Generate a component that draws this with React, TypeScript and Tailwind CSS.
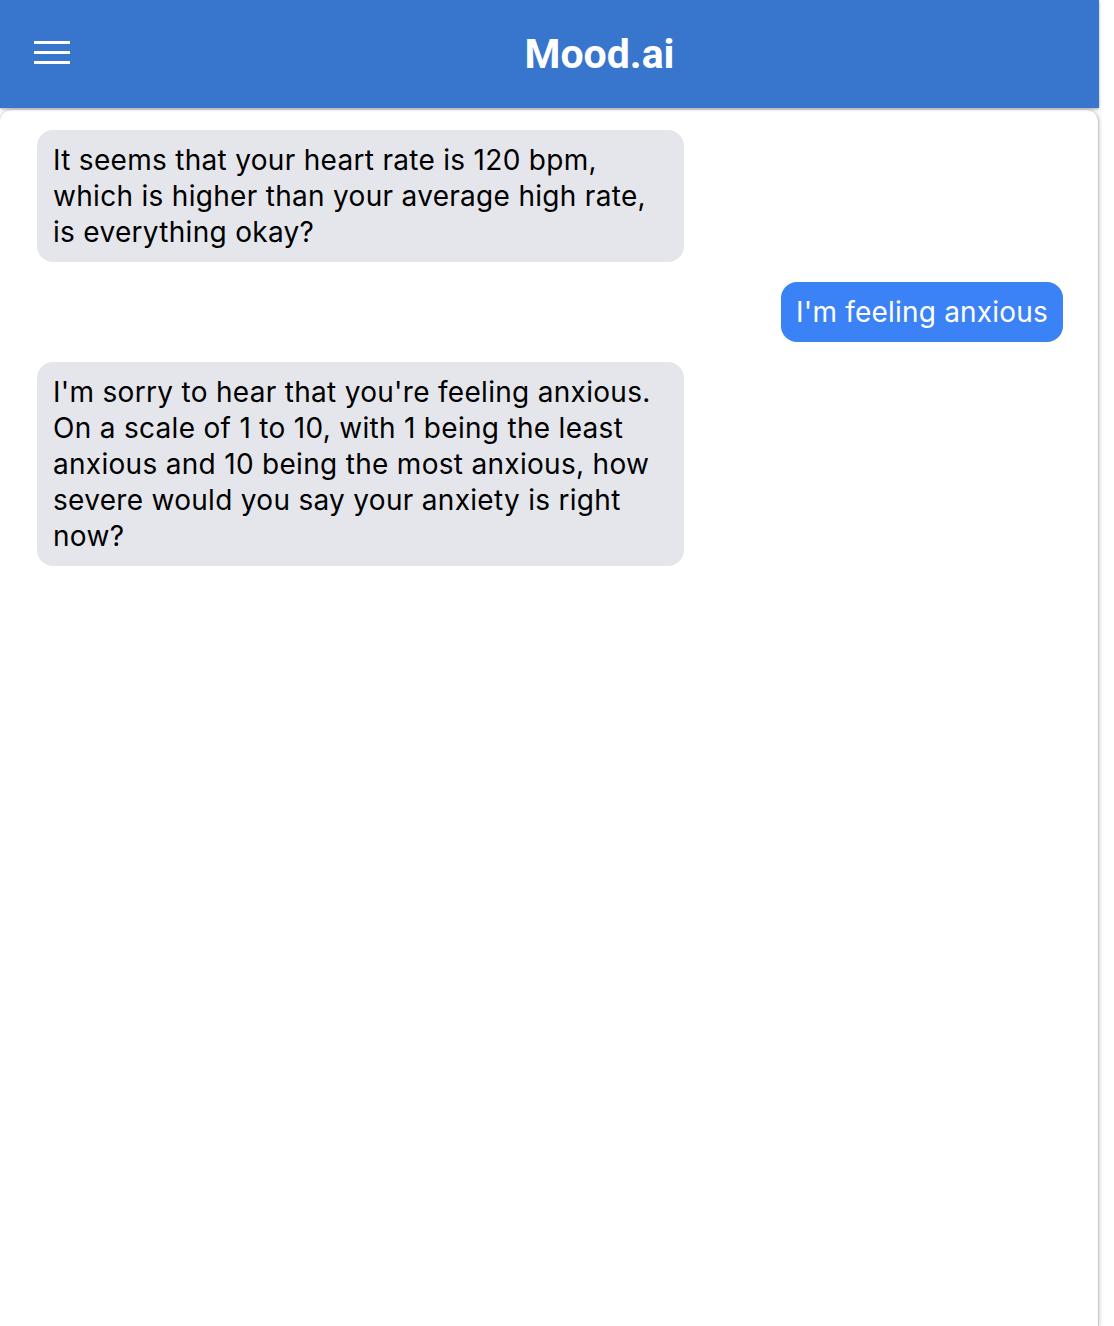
const messages = [
  {
    from: "bot",
    text: "It seems that your heart rate is 120 bpm, which is higher than your average high rate, is everything okay?",
  },
  { from: "user", text: "I'm feeling anxious" },
  {
    from: "bot",
    text: "I'm sorry to hear that you're feeling anxious. On a scale of 1 to 10, with 1 being the least anxious and 10 being the most anxious, how severe would you say your anxiety is right now?",
  },
];

const MenuIcon = () => {
  return (
    <button className="flex flex-col gap-[6.5px] w-[36px]">
      <span className="block h-[3.5px] w-full bg-white" />
      <span className="block h-[3.5px] w-full bg-white" />
      <span className="block h-[3.5px] w-full bg-white" />
    </button>
  );
};

const Bubble = ({ from, text }: { from: string; text: string }) => {
  if (from === "user") {
    return (
      <div className="flex justify-end">
        <p className="bg-[#3b82f6] text-white rounded-2xl px-[15px] py-3 max-w-[647px] text-[28px] leading-[36px] tracking-[0.2px]">
          {text}
        </p>
      </div>
    );
  }
  return (
    <div className="flex justify-start">
      <p className="bg-[#e5e6eb] text-black rounded-2xl px-4 py-3 max-w-[647px] w-[647px] text-[28px] leading-[36px] tracking-[0.3px]">
        {text}
      </p>
    </div>
  );
};

export default function App() {
  return (
    <div className="w-[1099px] min-h-[1326px] bg-white font-['Inter',sans-serif] flex flex-col">
      <header className="relative z-10 h-[108px] bg-[#3875cc] flex items-center shadow-[0_1px_3px_rgba(0,0,0,0.35)]">
        <div className="w-[100px] pl-[34px] flex items-center -mt-[3px]">
          <MenuIcon />
        </div>
        <h1 className="flex-1 text-center text-white font-['Roboto',sans-serif] font-bold text-[41px] leading-none">
          Mood.ai
        </h1>
      </header>
      <main className="flex-1 mt-[2px] rounded-t-xl border-r border-[#c8c8c8] shadow-[0_0_4px_rgba(0,0,0,0.25)] pr-[35px] pl-[37px] pt-5 flex flex-col gap-5">
        {messages.map((m, i) => (
          <Bubble key={i} from={m.from} text={m.text} />
        ))}
      </main>
    </div>
  );
}
